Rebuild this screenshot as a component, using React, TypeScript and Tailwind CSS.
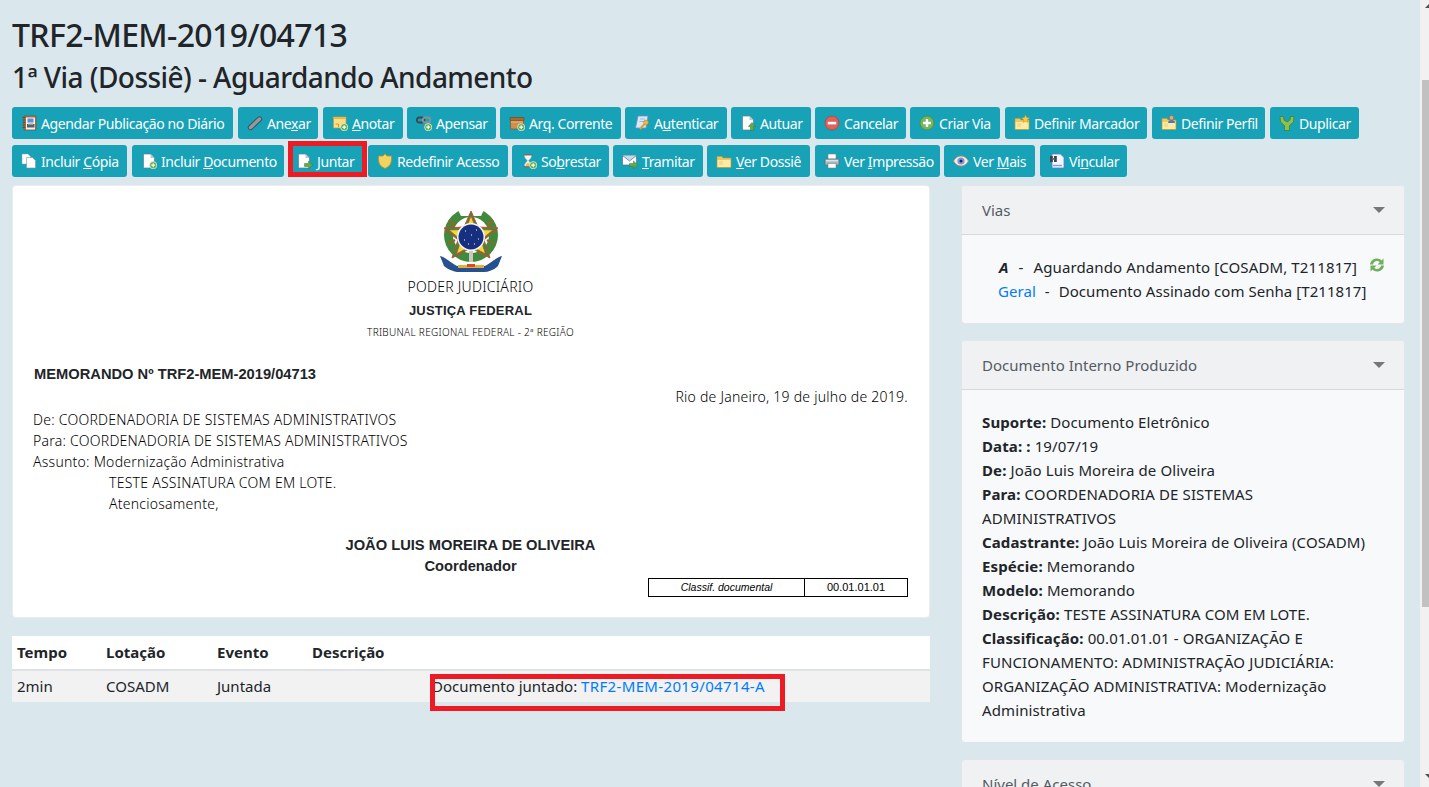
import React from 'react';

const Plus = () => (
  <g>
    <circle cx="12.2" cy="12.2" r="3.6" fill="#5fa84e" stroke="#e8f5e0" strokeWidth="0.8" />
    <path d="M10.2 12.2h4M12.2 10.2v4" stroke="#fff" strokeWidth="1.2" />
  </g>
);

const Page = ({ x = 2.5 }: { x?: number }) => (
  <path d={`M${x} 1h7l4 4v10h-11z`} fill="#fff" stroke="#5d7f8c" strokeWidth="0.7" />
);

const Fold = () => <path d="M9.5 1v4h4z" fill="#b9c9d2" />;

const GreenArrow = () => <path d="M7.5 10.5h4V8l4.2 4-4.2 4v-2.5h-4z" fill="#62a84c" stroke="#3d7a30" strokeWidth="0.5" />;

const Folder = () => (
  <g>
    <path d="M1 3.500h5l1 1.500h8v9.500H1z" fill="#f0c860" stroke="#c39a3c" strokeWidth="0.6" />
    <path d="M1.600 7h12.800v7H1.600z" fill="#fdeba6" />
    <path d="M3 9h4M3 11h4" stroke="#e4c068" strokeWidth="0.7" />
  </g>
);

const icons: Record<string, React.ReactNode> = {
  agenda: (
    <g>
      <path d="M3 1h12v14H3z" fill="#b9743c" stroke="#7a4a26" strokeWidth="0.6" />
      <path d="M5 2.5h9v12H5z" fill="#eef3f8" />
      <path d="M6.5 3.5h6v4h-6z" fill="#5f8fd0" />
      <path d="M6 9h7.5v3.5H6z" fill="#59606a" />
      <path d="M7 8h5v1.5H7z" fill="#c7ccd2" />
      <path d="M1.5 2.5h3M1.5 5h3M1.5 7.5h3M1.5 10h3M1.5 12.5h3" stroke="#6a4a30" strokeWidth="1" />
    </g>
  ),
  anexar: (
    <g>
      <path d="M3.500 12.500 12.500 4" stroke="#3f5058" strokeWidth="5.400" strokeLinecap="round" />
      <path d="M3.500 12.500 12.500 4" stroke="#8f9ba1" strokeWidth="3.400" strokeLinecap="round" />
    </g>
  ),
  anotar: (
    <g>
      <path d="M1.5 2h12.5v11H1.5z" fill="#fbdf85" stroke="#d09a38" strokeWidth="0.7" />
      <path d="M1.5 2h12.5v2H1.5z" fill="#eeb54c" />
      <path d="M3.5 9h3v3" stroke="#d09a38" fill="none" />
      <Plus />
    </g>
  ),
  apensar: (
    <g>
      <rect x="0.800" y="2.500" width="7.500" height="5" rx="2.500" fill="none" stroke="#3f4548" strokeWidth="1.800" />
      <rect x="6.800" y="2.500" width="7.500" height="5" rx="2.500" fill="none" stroke="#8a9195" strokeWidth="1.800" />
      <Plus />
    </g>
  ),
  arq: (
    <g>
      <path d="M1 2.5h14v3H1z" fill="#a96a30" stroke="#6e4420" strokeWidth="0.6" />
      <path d="M1.5 5.5h13v8.5h-13z" fill="#d18f4c" stroke="#7e4f26" strokeWidth="0.6" />
      <path d="M2 7h12" stroke="#eab478" />
      <Plus />
    </g>
  ),
  autenticar: (
    <g>
      <path d="M4 1h10l-2 12H1.5z" fill="#dbe6f7" stroke="#6f8fc4" strokeWidth="0.8" />
      <path d="M6 4h5M5.5 6.5h5" stroke="#9db5dc" />
      <circle cx="12" cy="7.5" r="2.4" fill="#eeb93f" stroke="#a97b1f" strokeWidth="0.5" />
      <path d="M10.5 9 6 14" stroke="#d9a436" strokeWidth="2" />
    </g>
  ),
  autuar: (
    <g>
      <Page />
      <Fold />
      <path d="M12 7.5l3.700 4h-2.200v4h-3v-4H8.300z" fill="#62a84c" stroke="#3d7a30" strokeWidth="0.5" />
    </g>
  ),
  cancelar: (
    <g>
      <circle cx="8" cy="8" r="7" fill="#e0605a" stroke="#a8403c" strokeWidth="0.7" />
      <path d="M3.800 6.800h8.400v2.600H3.800z" fill="#fff" />
    </g>
  ),
  criar: (
    <g>
      <circle cx="8" cy="8" r="7" fill="#74b65c" stroke="#4b8a3a" strokeWidth="0.7" />
      <path d="M4 8h8M8 4v8" stroke="#fff" strokeWidth="2.400" />
    </g>
  ),
  marcador: (
    <g>
      <Folder />
      <path d="m11.500 0 1.200 2.600 2.800.3-2.100 1.900.6 2.800-2.500-1.400L9 7.600l.6-2.800-2.100-1.900 2.800-.3z" fill="#f6c93e" stroke="#c68f22" strokeWidth="0.4" />
    </g>
  ),
  perfil: (
    <g>
      <Folder />
      <circle cx="10.500" cy="2.800" r="2.300" fill="#e2a983" stroke="#8a5a3a" strokeWidth="0.5" />
      <path d="M7 8c0-2 1.500-3 3.500-3s3.500 1 3.500 3z" fill="#4f78b8" />
    </g>
  ),
  duplicar: (
    <path d="M1 1.500h3.500l.5 3.500 3 2 3-2 .5-3.500H15l-.5 5.500-4 3.500v5h-5v-5l-4-3.500z" fill="#8cc04f" stroke="#3e7a2c" strokeWidth="0.7" />
  ),
  copia: (
    <g>
      <path d="M1 1h6l2.500 2.500V11H1z" fill="#fff" stroke="#8aa0aa" strokeWidth="0.5" />
      <path d="M5.500 4.500h6l3 3V15h-9z" fill="#fff" stroke="#7c929c" strokeWidth="0.6" />
    </g>
  ),
  incluir: (
    <g>
      <Page />
      <Fold />
      <Plus />
    </g>
  ),
  juntar: (
    <g>
      <Page x={1.5} />
      <path d="M8.500 1v4h4z" fill="#b9c9d2" />
      <GreenArrow />
    </g>
  ),
  redefinir: (
    <path d="M8 .8 10 3h4.500c0 6 0 9.500-6.500 12.500C1.500 12.500 1.500 9 1.500 3H6z" fill="#f3d25f" stroke="#b9922c" strokeWidth="0.8" />
  ),
  sobrestar: (
    <g>
      <path d="M2.500 1h9v1.500h-9zM2.500 13h9v1.500h-9z" fill="#8a6a48" />
      <path d="M3.500 2.500h7c0 3-2.500 4-2.800 5.200.3 1.300 2.800 2.300 2.800 5.300h-7c0-3 2.500-4 2.800-5.300C6 6.500 3.500 5.500 3.500 2.500z" fill="#f3f6fa" stroke="#a8b4c0" strokeWidth="0.5" />
      <path d="M5 11.500 7 9.500l2 2v1.500H5z" fill="#e7b85c" />
      <Plus />
    </g>
  ),
  tramitar: (
    <g>
      <path d="M.500 2.500h14v9.500H.500z" fill="#fff" stroke="#4f6fa0" strokeWidth="0.7" />
      <path d="M.500 2.500l7 5.500 7-5.500" fill="#c9d7ec" stroke="#4f6fa0" strokeWidth="0.7" />
      <GreenArrow />
    </g>
  ),
  dossie: <Folder />,
  impressao: (
    <g>
      <path d="M4 1h8v5H4z" fill="#fff" stroke="#7b8894" strokeWidth="0.6" />
      <path d="M1 6h14v6H1z" fill="#aab4bd" stroke="#5f6a74" strokeWidth="0.6" />
      <path d="M2 7h12v1.500H2z" fill="#dde2e6" />
      <path d="M4 10.500h8V15H4z" fill="#fff" stroke="#7b8894" strokeWidth="0.6" />
    </g>
  ),
  vermais: (
    <g>
      <path d="M.500 8C3 4 5.500 3 8 3s5 1 7.500 5c-2.500 4-5 5-7.500 5s-5-1-7.500-5z" fill="#f2ece4" stroke="#b08d6c" strokeWidth="0.9" />
      <circle cx="8" cy="8" r="3.600" fill="#7f97d8" />
      <circle cx="8" cy="8" r="1.500" fill="#1f2a50" />
    </g>
  ),
  vincular: (
    <g>
      <path d="M3 1h8.500L15 4.500V15H3z" fill="#f3f7fd" stroke="#5c7ec0" strokeWidth="0.8" />
      <path d="M1 3h2.800v6H1zM5 3h2.800v6H5z" fill="#3f4448" />
      <path d="M3.500 5h2v2h-2z" fill="#70777c" />
      <path d="M4 12.500h9" stroke="#7ba0dc" strokeWidth="1.400" />
    </g>
  ),
};

type Btn = { icon: string; label: React.ReactNode; w: string };

const row1: Btn[] = [
  { icon: 'agenda', label: 'Agendar Publicação no Diário', w: 'w-[221px]' },
  { icon: 'anexar', label: <>Ane<u>x</u>ar</>, w: 'w-[80px] ml-px' },
  { icon: 'anotar', label: <><u>A</u>notar</>, w: 'w-[80px] ml-px' },
  { icon: 'apensar', label: 'Apensar', w: 'w-[89px]' },
  { icon: 'arq', label: <>Ar<u>q</u>. Corrente</>, w: 'w-[121px]' },
  { icon: 'autenticar', label: <>A<u>u</u>tenticar</>, w: 'w-[102px]' },
  { icon: 'autuar', label: 'Autuar', w: 'w-[80px]' },
  { icon: 'cancelar', label: 'Cancelar', w: 'w-[91px]' },
  { icon: 'criar', label: 'Criar Via', w: 'w-[90px]' },
  { icon: 'marcador', label: 'Definir Marcador', w: 'w-[142px] ml-px' },
  { icon: 'perfil', label: 'Definir Perfil', w: 'w-[113px] ml-px' },
  { icon: 'duplicar', label: 'Duplicar', w: 'w-[89px] ml-px' },
];

const row2: Btn[] = [
  { icon: 'copia', label: <>Incluir <u>C</u>ópia</>, w: 'w-[115px]' },
  { icon: 'incluir', label: <>Incluir <u>D</u>ocumento</>, w: 'w-[152px] ml-px' },
  { icon: 'juntar', label: <><u>J</u>untar</>, w: 'w-[75px]' },
  { icon: 'redefinir', label: 'Redefinir Acesso', w: 'w-[140px] ml-px' },
  { icon: 'sobrestar', label: <>So<u>b</u>restar</>, w: 'w-[97px]' },
  { icon: 'tramitar', label: <><u>T</u>ramitar</>, w: 'w-[90px]' },
  { icon: 'dossie', label: <><u>V</u>er Dossiê</>, w: 'w-[103px]' },
  { icon: 'impressao', label: <>Ver <u>I</u>mpressão</>, w: 'w-[125px] ml-px' },
  { icon: 'vermais', label: <>Ver <u>M</u>ais</>, w: 'w-[91px]' },
  { icon: 'vincular', label: <>Vi<u>n</u>cular</>, w: 'w-[87px] ml-px' },
];

const ActionButton = ({ btn }: { btn: Btn }) => (
  <a className={`${btn.w} h-8 shrink-0 flex items-center gap-[4px] pl-[9px] whitespace-nowrap rounded-[3px] bg-[#17a2b8] text-[14px] tracking-[-0.4px] text-white`}>
    <svg width="16" height="16" viewBox="0 0 16 16" className="shrink-0">{icons[btn.icon]}</svg>
    <span>{btn.label}</span>
  </a>
);

const Brasao = () => (
  <svg width="62" height="66" viewBox="0 0 62 66">
    <circle cx="31" cy="28" r="27" fill="#3f8a3c" />
    <circle cx="31" cy="28" r="18" fill="#fff" />
    <path d="M18 3a27 27 0 0 1 26 0l-3 6H21z" fill="#fff" />
    <path d="M9 13l6 5M5 24l8 1M8 37l7-4M53 13l-6 5M57 24l-8 1M54 37l-7-4" stroke="#8a6a2c" strokeWidth="2.400" />
    <path d="M31 4l7 16 20 1-14 12 6 18-19-10-19 10 6-18L4 21l20-1z" fill="#2f8f46" stroke="#d9422c" strokeWidth="1" />
    <path d="M31 9l5.500 13.500L53 23 41 33l4.500 14L31 39l-14.500 8L21 33 9 23l16.500-.5z" fill="#f1d93a" stroke="#c94a2a" strokeWidth="0.800" />
    <circle cx="31" cy="30" r="14" fill="#f4f4f4" />
    <circle cx="31" cy="30" r="12.500" fill="#16307f" />
    <path d="M25 24h1M36 23h1M31 28h1M24 33h1M38 32h1M34 37h1M28 37h1" stroke="#fff" strokeWidth="1" />
    <path d="M29 44h4v11h-4z" fill="#c9c9c0" />
    <path d="M0 49c5 1 11 7 17 10h28c6-3 12-9 17-10l-4 10c-4 4-10 6-14 6H19c-4 0-10-2-15-6z" fill="#27508f" />
    <path d="M18 58h26v3H18z" fill="#e3b13a" />
    <path d="M27 57h8v3h-8z" fill="#d94a2a" />
  </svg>
);

const SideHeader = ({ title }: { title: string }) => (
  <div className="h-[49px] shrink-0 flex items-center justify-between pl-5 pr-[19px] bg-[#f0f1f3] border-b border-[#d6d8da] text-[15px] tracking-normal text-[#545b62]">
    <span>{title}</span>
    <span className="w-0 h-0 border-x-[6px] border-x-transparent border-t-[6px] border-t-[#777]" />
  </div>
);

const info: [string, string][] = [
  ['Suporte:', 'Documento Eletrônico'],
  ['Data: :', '19/07/19'],
  ['De:', 'João Luis Moreira de Oliveira'],
  ['Para:', 'COORDENADORIA DE SISTEMAS ADMINISTRATIVOS'],
  ['Cadastrante:', 'João Luis Moreira de Oliveira (COSADM)'],
  ['Espécie:', 'Memorando'],
  ['Modelo:', 'Memorando'],
  ['Descrição:', 'TESTE ASSINATURA COM EM LOTE.'],
  ['Classificação:', '00.01.01.01 - ORGANIZAÇÃO E FUNCIONAMENTO: ADMINISTRAÇÃO JUDICIÁRIA: ORGANIZAÇÃO ADMINISTRATIVA: Modernização Administrativa'],
];

export default function App() {
  return (
    <div className="flex h-[787px] overflow-hidden bg-[#dae8ed] font-['Noto_Sans',sans-serif] text-[#212529]">
      <main className="relative w-[1420px] shrink-0 pl-3 pt-[12px]">
        <h1 className="text-[32px] leading-[46px] font-medium tracking-[-0.65px]">TRF2-MEM-2019/04713</h1>
        <h2 className="text-[28px] leading-[40px] font-medium tracking-[-0.55px] -mt-[1px]">1ª Via (Dossiê) - Aguardando Andamento</h2>

        <div className="flex gap-[4px] mt-[10px]">
          {row1.map((b, i) => <ActionButton key={i} btn={b} />)}
        </div>
        <div className="flex gap-[4px] mt-[6px]">
          {row2.map((b, i) => <ActionButton key={i} btn={b} />)}
        </div>

        {/* marcações vermelhas por cima da tela */}
        <div className="absolute left-[288px] top-[141px] w-[79px] h-[36px] border-[5px] border-[#ed1c24]" />
        <div className="absolute left-[430px] top-[674px] w-[355px] h-[37px] border-[5px] border-[#ed1c24]" />

        <div className="flex gap-[31px] mt-2">
          <div className="w-[918px] shrink-0">
            <section className="h-[433px] bg-white rounded border border-[#e9edef] pt-[21px] pl-[20px] pr-[21px] text-[14px] leading-[21px] font-light tracking-[0.25px] text-black">
              <div className="flex flex-col items-center">
                <Brasao />
                <p className="mt-[3px] leading-[21px]">PODER JUDICIÁRIO</p>
                <p className="mt-[3px] font-['Liberation_Sans',sans-serif] font-bold text-[13px] tracking-[0.2px] text-[#212529]">JUSTIÇA FEDERAL</p>
                <p className="mt-[1px] text-[10px] tracking-[0.3px]">TRIBUNAL REGIONAL FEDERAL - 2ª REGIÃO</p>
              </div>
              <p className="mt-[21px] ml-px font-['Liberation_Sans',sans-serif] font-bold text-[14.7px] tracking-normal text-[#212529]">MEMORANDO Nº TRF2-MEM-2019/04713</p>
              <p className="mt-[1px] text-right">Rio de Janeiro, 19 de julho de 2019.</p>
              <div className="mt-[2px]">
                <p>De: COORDENADORIA DE SISTEMAS ADMINISTRATIVOS</p>
                <p>Para: COORDENADORIA DE SISTEMAS ADMINISTRATIVOS</p>
                <p>Assunto: Modernização Administrativa</p>
                <p className="pl-[76px]">TESTE ASSINATURA COM EM LOTE.</p>
                <p className="pl-[76px]">Atenciosamente,</p>
              </div>
              <div className="mt-[21px] text-center font-['Liberation_Sans',sans-serif] font-bold text-[14.7px] tracking-normal text-[#212529]">
                <p>JOÃO LUIS MOREIRA DE OLIVEIRA</p>
                <p>Coordenador</p>
              </div>
              <div className="ml-[615px] mt-[1px] w-[260px] h-[19px] flex border border-black font-['Liberation_Sans',sans-serif] text-[10.5px] font-normal tracking-normal leading-[17px] text-center">
                <span className="w-[156px] border-r border-black italic">Classif. documental</span>
                <span className="flex-1 text-[11px]">00.01.01.01</span>
              </div>
            </section>

            <table className="mt-[18px] w-full table-fixed text-[15px]">
              <thead>
                <tr className="h-[34px] bg-white border-b-2 border-[#dee2e6] text-left font-bold">
                  <th className="w-[89px] pl-[5px]">Tempo</th>
                  <th className="w-[111px] pl-[5px]">Lotação</th>
                  <th className="w-[95px] pl-[5px]">Evento</th>
                  <th className="w-[120px] pl-[5px]">Descrição</th>
                  <th />
                </tr>
              </thead>
              <tbody>
                <tr className="h-[32px] bg-[#f2f2f2]">
                  <td className="pl-[5px]">2min</td>
                  <td className="pl-[5px]">COSADM</td>
                  <td className="pl-[5px]">Juntada</td>
                  <td />
                  <td className="pl-[5px]">Documento juntado: <a className="text-[#007bff] tracking-[0.35px]">TRF2-MEM-2019/04714-A</a></td>
                </tr>
              </tbody>
            </table>
          </div>

          <aside className="w-[444px] shrink-0 text-[15px] leading-[24px] tracking-[0.12px]">
            <div className="h-[139px] flex flex-col rounded border border-[#e3e6e8] overflow-hidden bg-[#f8f9fa]">
              <SideHeader title="Vias" />
              <div className="pl-9 pr-5 pt-[20px] whitespace-nowrap">
                <div className="flex items-center">
                  <b className="italic font-bold pl-px">A</b>
                  <span className="mx-[10px]">-</span>
                  <span>Aguardando Andamento [COSADM, T211817]</span>
                  <svg width="16" height="16" viewBox="0 0 16 16" className="ml-[12px] -mt-1 shrink-0">
                    <path d="M1 7.500C1.500 3.500 5 1.500 8 1.500c2 0 3.500.8 4.500 2L14.500 1.500v6h-6l2.200-2.200C10 4.500 9 4 8 4 6 4 4.500 5.500 4 7.500z" fill="#6fb05c" />
                    <path d="M15 8.500c-.5 4-4 6-7 6-2 0-3.500-.8-4.500-2L1.500 14.500v-6h6l-2.200 2.200C6 11.500 7 12 8 12c2 0 3.500-1.500 4-3.500z" fill="#6fb05c" />
                  </svg>
                </div>
                <div className="flex tracking-[0.05px]">
                  <a className="text-[#007bff]">Geral</a>
                  <span className="mx-[9px]">-</span>
                  <span>Documento Assinado com Senha [T211817]</span>
                </div>
              </div>
            </div>

            <div className="mt-[16px] h-[403px] flex flex-col rounded border border-[#e3e6e8] overflow-hidden bg-[#f8f9fa]">
              <SideHeader title="Documento Interno Produzido" />
              <div className="pl-5 pr-5 pt-[20px]">
                {info.map(([k, v]) => (
                  <p key={k}><b className="font-bold">{k}</b> {v}</p>
                ))}
              </div>
            </div>

            <div className="mt-[16px] h-[60px] rounded border border-[#e3e6e8] overflow-hidden">
              <SideHeader title="Nível de Acesso" />
            </div>
          </aside>
        </div>
      </main>

      <div className="flex-1 bg-[#f1f1f1] flex flex-col pl-[2px]">
        <span className="ml-[3px] mt-[4px] w-0 h-0 border-x-[4px] border-x-transparent border-b-[4px] border-b-[#505050]" />
        <div className="mt-[72px] h-[527px] bg-[#c1c1c1]" />
        <span className="ml-[3px] mt-[167px] w-0 h-0 border-x-[4px] border-x-transparent border-t-[4px] border-t-[#505050]" />
      </div>
    </div>
  );
}
